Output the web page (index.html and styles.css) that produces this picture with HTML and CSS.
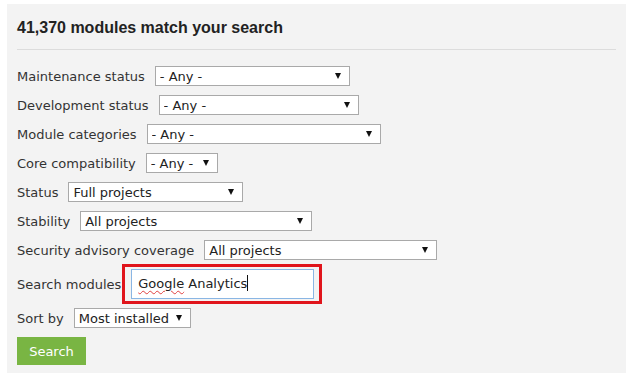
FILE: index.html
```html
<!DOCTYPE html>
<html lang="en">

<head>
  <meta charset="UTF-8">
  <title>Module search</title>
  <link rel="stylesheet" href="styles.css">
</head>

<body>
  <div class="panel">
    <h2 class="title">41,370 modules match your search</h2>
    <form class="filters">
      <div class="row">
        <label>Maintenance status</label>
        <span class="select w-maint"><select><option>- Any -</option></select></span>
      </div>
      <div class="row">
        <label>Development status</label>
        <span class="select w-dev"><select><option>- Any -</option></select></span>
      </div>
      <div class="row">
        <label>Module categories</label>
        <span class="select w-cat"><select><option>- Any -</option></select></span>
      </div>
      <div class="row">
        <label>Core compatibility</label>
        <span class="select w-core"><select><option>- Any -</option></select></span>
      </div>
      <div class="row">
        <label>Status</label>
        <span class="select w-status"><select><option>Full projects</option></select></span>
      </div>
      <div class="row">
        <label>Stability</label>
        <span class="select w-stab"><select><option>All projects</option></select></span>
      </div>
      <div class="row">
        <label>Security advisory coverage</label>
        <span class="select w-sec"><select><option>All projects</option></select></span>
      </div>
      <div class="row row-search">
        <label>Search modules</label>
        <div class="highlight">
          <div class="text-input"><span class="typo">Google</span> Analytics<span class="caret"></span></div>
        </div>
      </div>
      <div class="row row-sort">
        <label>Sort by</label>
        <span class="select w-sort"><select><option>Most installed</option></select></span>
      </div>
      <button type="button" class="btn">Search</button>
    </form>
  </div>
</body>

</html>
```

FILE: styles.css
```css
body {
  margin: 0;
  background-color: #ffffff;
  font-family: 'DejaVu Sans', Verdana, sans-serif;
  font-size: 13px;
  color: #333;
}

.panel {
  margin: 4px 7px 0 7px;
  width: 619px;
  height: 369px;
  background-color: #f3f3f3;
  padding: 0 10px;
  box-sizing: border-box;
}

.title {
  margin: 0;
  padding: 15px 0 12px;
  font-family: 'Liberation Sans', Arial, sans-serif;
  font-size: 16px;
  font-weight: bold;
  color: #222;
  border-bottom: 1px solid #dcdcdc;
}

.filters {
  display: flex;
  flex-direction: column;
  align-items: flex-start;
  gap: 9px;
  padding-top: 16px;
}

.row {
  display: flex;
  align-items: center;
  gap: 10px;
  height: 20px;
}

.row label {
  white-space: nowrap;
}

.select {
  position: relative;
  display: block;
  height: 20px;
}

.select::after {
  content: "";
  position: absolute;
  right: 9px;
  top: 7px;
  border-left: 3.5px solid transparent;
  border-right: 3.5px solid transparent;
  border-top: 6px solid #111;
  pointer-events: none;
}

.select select {
  appearance: none;
  -webkit-appearance: none;
  width: 100%;
  height: 20px;
  margin: 0;
  padding: 0 4px;
  border: 1px solid #a9a9a9;
  border-radius: 0;
  background-color: #fff;
  font-family: inherit;
  font-size: 13px;
  color: #222;
}

.w-maint { width: 195px; }
.w-dev { width: 200px; }
.w-cat { width: 234px; }
.w-core { width: 72px; }
.w-status { width: 175px; }
.w-stab { width: 232px; }
.w-sec { width: 233px; }
.w-sort { width: 117px; }

.row-search {
  height: 40px;
  gap: 1px;
  margin: -5px 0;
}

.highlight {
  border: 3px solid #e0141b;
  padding: 2px 5px 2px 6px;
}

.text-input {
  width: 183px;
  height: 30px;
  box-sizing: border-box;
  border: 1px solid #8ab6e4;
  background-color: #fff;
  padding: 0 6px;
  line-height: 28px;
  color: #222;
  white-space: nowrap;
}

.typo {
  text-decoration: underline wavy #e04040;
  text-decoration-thickness: 1px;
  text-underline-offset: 2px;
}

.caret {
  display: inline-block;
  width: 1px;
  height: 16px;
  background-color: #111;
  vertical-align: -3px;
}

.btn {
  width: 69px;
  height: 28px;
  border: none;
  background-color: #79b543;
  color: #fff;
  font-family: inherit;
  font-size: 13px;
  cursor: pointer;
}
```
